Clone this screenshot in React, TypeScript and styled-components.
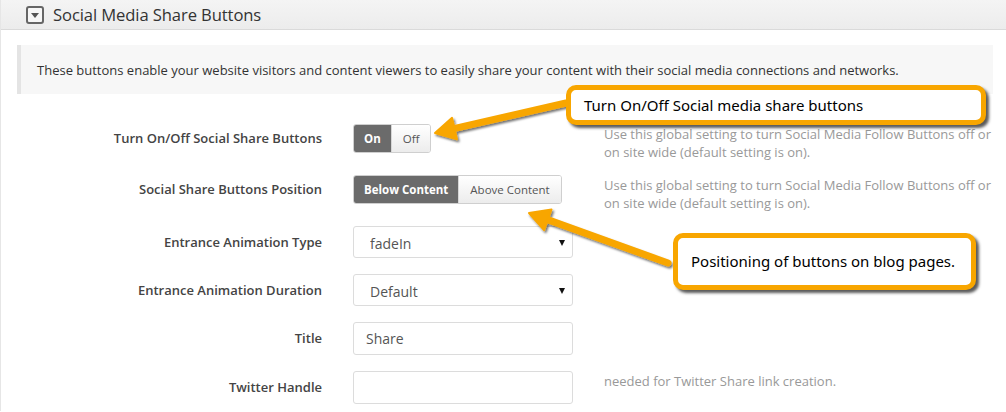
import React from 'react';
import styled, { createGlobalStyle } from 'styled-components';

const GlobalStyle = createGlobalStyle`
  html, body {
    margin: 0;
    padding: 0;
    background: #fff;
  }
  body {
    font-family: "Open Sans", "Noto Sans", sans-serif;
    color: #333;
  }
`;

const ORANGE = '#f8a600';

const Page = styled.div`
  position: relative;
  width: 1006px;
  height: 412px;
  overflow: hidden;
  background: #fff;
`;

const Panel = styled.section`
  height: 100%;
  border-left: 1px solid #e6e6e6;
  box-sizing: border-box;
`;

const Header = styled.header`
  height: 29px;
  display: flex;
  align-items: center;
  gap: 9px;
  padding-left: 25px;
  background: linear-gradient(#f4f4f4, #ececec);
  border-top: 1px solid #e2e2e2;
  border-bottom: 1px solid #dadada;
  box-sizing: content-box;
  margin-top: -1px;
`;

const ToggleIcon = styled.span`
  width: 14px;
  height: 14px;
  border: 2px solid #666;
  border-radius: 3px;
  background: #f7f7f7;
  display: flex;
  align-items: center;
  justify-content: center;

  &::after {
    content: '';
    width: 0;
    height: 0;
    border-left: 4px solid transparent;
    border-right: 4px solid transparent;
    border-top: 5px solid #555;
    margin-top: 1px;
  }
`;

const HeaderTitle = styled.h2`
  margin: 0;
  font-size: 16.6px;
  font-weight: 400;
  color: #333;
  letter-spacing: -0.1px;
`;

const Intro = styled.div`
  margin: 15px 13px 0 16px;
  height: 49px;
  display: flex;
  align-items: center;
  padding-left: 16px;
  border-left: 4px solid #e4e4e4;
  background: #f7f7f7;
  font-size: 13px;
  color: #333;
`;

const Form = styled.div`
  display: flex;
  flex-direction: column;
  gap: 16px;
  padding-top: 30px;
`;

const Row = styled.div<{ $h: number }>`
  display: grid;
  grid-template-columns: 321px 220px 1fr;
  grid-template-rows: ${p => p.$h}px;
  column-gap: 31px;
  align-items: start;
  justify-items: start;
`;

const Label = styled.label<{ $h: number }>`
  justify-self: stretch;
  text-align: right;
  font-size: 13px;
  font-weight: 600;
  color: #444;
  line-height: ${p => p.$h}px;
`;

const Help = styled.p`
  margin: 0;
  padding-top: 1px;
  max-width: 396px;
  font-size: 13px;
  line-height: 18px;
  color: #999;
`;

const ButtonGroup = styled.div`
  display: inline-flex;
  height: 29px;
  border: 1px solid #cfcfcf;
  border-radius: 3px;
  overflow: hidden;
  box-sizing: border-box;
`;

const GroupButton = styled.button<{ $active?: boolean }>`
  border: 0;
  margin: 0;
  padding: 0 10px;
  font-family: "Open Sans", sans-serif;
  font-size: 11.5px;
  font-weight: ${p => (p.$active ? 700 : 400)};
  color: ${p => (p.$active ? '#fff' : '#555')};
  background: ${p => (p.$active ? '#6b6b6b' : 'linear-gradient(#ffffff, #ececec)')};
  & + & {
    border-left: 1px solid #d6d6d6;
    padding: 0 11px;
  }
`;

const SelectWrap = styled.div`
  position: relative;
  width: 220px;

  &::after {
    content: '';
    position: absolute;
    right: 8px;
    top: 14px;
    width: 0;
    height: 0;
    border-left: 3px solid transparent;
    border-right: 3px solid transparent;
    border-top: 6px solid #111;
    pointer-events: none;
  }
`;

const Select = styled.select`
  width: 220px;
  height: 32px;
  appearance: none;
  -webkit-appearance: none;
  border: 1px solid #dcdcdc;
  border-radius: 3px;
  background: #fff;
  padding: 2px 0 0 16px;
  font-family: "Open Sans", sans-serif;
  font-size: 14px;
  color: #555;
  box-sizing: border-box;
`;

const TextInput = styled.input`
  width: 220px;
  height: 33px;
  border: 1px solid #dcdcdc;
  border-radius: 3px;
  padding: 0 12px;
  font-family: "Open Sans", sans-serif;
  font-size: 14px;
  color: #555;
  box-sizing: border-box;
`;

const Callout = styled.div<{ $x: number; $y: number; $w: number; $h: number; $pt: number }>`
  position: absolute;
  left: ${p => p.$x}px;
  top: ${p => p.$y}px;
  width: ${p => p.$w}px;
  height: ${p => p.$h}px;
  box-sizing: border-box;
  border: 5px solid ${ORANGE};
  border-radius: 10px;
  background: #fff;
  box-shadow: 3px 3px 3px rgba(0, 0, 0, 0.65);
  padding: ${p => p.$pt}px 0 0 13px;
  font-family: "Noto Sans", "Open Sans", sans-serif;
  font-size: 15px;
  line-height: 22px;
  color: #000;
`;

const Overlay = styled.svg`
  position: absolute;
  left: 0;
  top: 0;
  pointer-events: none;
`;

type ArrowProps = { x1: number; y1: number; x2: number; y2: number };

const Arrow: React.FC<ArrowProps> = ({ x1, y1, x2, y2 }) => {
  const dx = x2 - x1;
  const dy = y2 - y1;
  const len = Math.hypot(dx, dy);
  const ux = dx / len;
  const uy = dy / len;
  const headLen = 20;
  const headW = 11;
  const bx = x2 - ux * headLen;
  const by = y2 - uy * headLen;
  const px = -uy;
  const py = ux;
  const pts = [
    [x2, y2],
    [bx + px * headW, by + py * headW],
    [bx - px * headW, by - py * headW],
  ]
    .map(p => p.join(','))
    .join(' ');
  return (
    <g filter="url(#arrowShadow)">
      <line x1={x1} y1={y1} x2={bx + ux * 4} y2={by + uy * 4} stroke={ORANGE} strokeWidth={7} strokeLinecap="round" />
      <polygon points={pts} fill={ORANGE} stroke={ORANGE} strokeWidth={2} strokeLinejoin="round" />
    </g>
  );
};

const selects = [
  { label: 'Entrance Animation Type', value: 'fadeIn' },
  { label: 'Entrance Animation Duration', value: 'Default' },
];

const helpText = 'Use this global setting to turn Social Media Follow Buttons off or on site wide (default setting is on).';

export default function App() {
  return (
    <Page>
      <GlobalStyle />
      <Panel>
        <Header>
          <ToggleIcon />
          <HeaderTitle>Social Media Share Buttons</HeaderTitle>
        </Header>
        <Intro>
          These buttons enable your website visitors and content viewers to easily share your content with their social media connections and networks.
        </Intro>
        <Form>
          <Row $h={35}>
            <Label $h={29}>Turn On/Off Social Share Buttons</Label>
            <ButtonGroup>
              <GroupButton $active>On</GroupButton>
              <GroupButton>Off</GroupButton>
            </ButtonGroup>
            <Help>{helpText}</Help>
          </Row>
          <Row $h={35}>
            <Label $h={29}>Social Share Buttons Position</Label>
            <ButtonGroup>
              <GroupButton $active>Below Content</GroupButton>
              <GroupButton>Above Content</GroupButton>
            </ButtonGroup>
            <Help>{helpText}</Help>
          </Row>
          {selects.map(r => (
            <Row key={r.label} $h={32}>
              <Label $h={32}>{r.label}</Label>
              <SelectWrap>
                <Select defaultValue={r.value}>
                  <option>{r.value}</option>
                </Select>
              </SelectWrap>
              <div />
            </Row>
          ))}
          <Row $h={33}>
            <Label $h={33}>Title</Label>
            <TextInput defaultValue="Share" />
            <div />
          </Row>
          <Row $h={33}>
            <Label $h={33}>Twitter Handle</Label>
            <TextInput />
            <Help>needed for Twitter Share link creation.</Help>
          </Row>
        </Form>
      </Panel>

      <Overlay width={1006} height={412}>
        <defs>
          <filter id="arrowShadow" x="-20%" y="-50%" width="140%" height="200%">
            <feDropShadow dx="1.5" dy="2" stdDeviation="1.2" floodColor="#000" floodOpacity="0.55" />
          </filter>
        </defs>
        <Arrow x1={566} y1={103} x2={435} y2={133} />
        <Arrow x1={668} y1={263} x2={529} y2={213} />
      </Overlay>

      <Callout $x={566} $y={85} $w={420} $h={40} $pt={4}>
        Turn On/Off Social media share buttons
      </Callout>
      <Callout $x={673} $y={233} $w={303} $h={57} $pt={12}>
        Positioning of buttons on blog pages.
      </Callout>
    </Page>
  );
}
